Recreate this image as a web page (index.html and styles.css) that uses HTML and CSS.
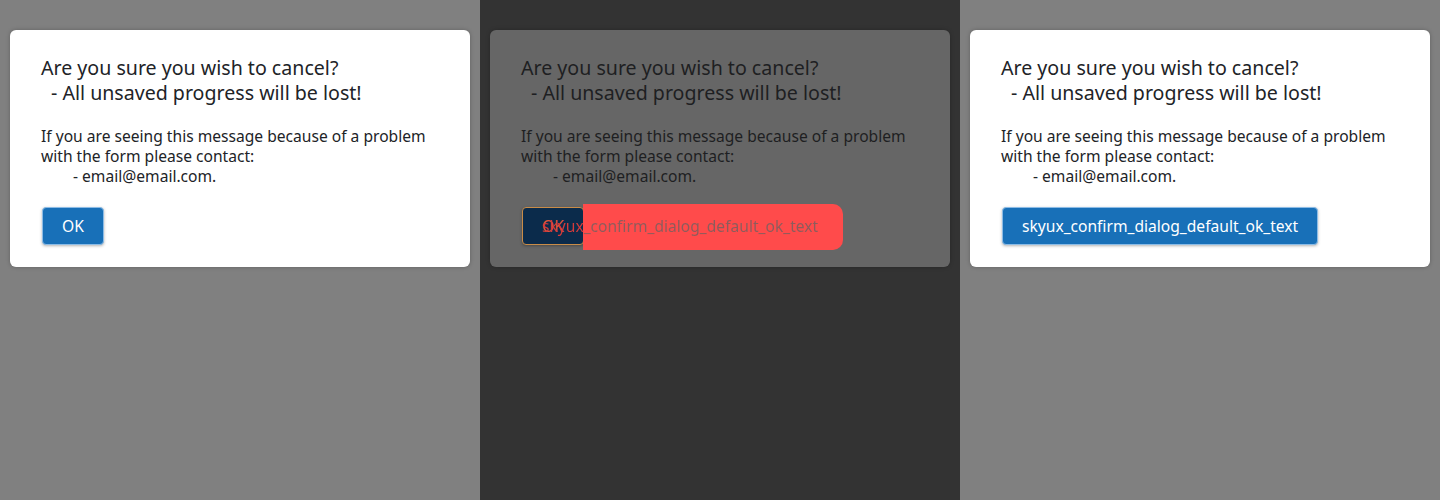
FILE: index.html
```html
<!DOCTYPE html>
<html>
<head>
<meta charset="utf-8">
<link rel="stylesheet" href="styles.css">
</head>
<body>
<div class="panels">
  <section class="panel panel-light">
    <div class="dialog">
      <h2 class="title">Are you sure you wish to cancel?<br><span class="indent-sm">- All unsaved progress will be lost!</span></h2>
      <p class="body">If you are seeing this message because of a problem with the form please contact:<br><span class="indent-lg">- email@email.com.</span></p>
      <div class="actions"><button class="btn">OK</button></div>
    </div>
  </section>
  <section class="panel panel-diff">
    <div class="dialog dialog-diff">
      <h2 class="title">Are you sure you wish to cancel?<br><span class="indent-sm">- All unsaved progress will be lost!</span></h2>
      <p class="body">If you are seeing this message because of a problem with the form please contact:<br><span class="indent-lg">- email@email.com.</span></p>
      <div class="actions actions-diff">
        <button class="btn btn-diff">OK</button>
        <div class="diff-mark"></div>
        <span class="diff-text">skyux_confirm_dialog_default_ok_text</span>
      </div>
    </div>
  </section>
  <section class="panel panel-light">
    <div class="dialog">
      <h2 class="title">Are you sure you wish to cancel?<br><span class="indent-sm">- All unsaved progress will be lost!</span></h2>
      <p class="body">If you are seeing this message because of a problem with the form please contact:<br><span class="indent-lg">- email@email.com.</span></p>
      <div class="actions"><button class="btn">skyux_confirm_dialog_default_ok_text</button></div>
    </div>
  </section>
</div>
</body>
</html>
```
FILE: styles.css
```css
* { box-sizing: border-box; }
html, body { margin: 0; padding: 0; }
body {
  font-family: "Noto Sans", "Open Sans", sans-serif;
  color: #212327;
  width: 1440px;
  height: 500px;
  overflow: hidden;
}
.panels {
  display: flex;
  height: 500px;
}
.panel {
  width: 480px;
  height: 500px;
  padding: 30px 10px;
}
.panel-light { background: #808080; }
.panel-diff { background: #333333; }

.dialog {
  background: #ffffff;
  border-radius: 6px;
  padding: 25px 30px 22px 31px;
  box-shadow: 0 0 4px rgba(0,0,0,0.25);
}
.dialog-diff {
  background: #666666;
  color: #1e1f22;
}
.title {
  margin: 0;
  font-size: 19.6px;
  font-weight: 400;
  line-height: 25px;
}
.indent-sm { padding-left: 10px; }
.body {
  margin: 21px 0 0;
  font-size: 15.6px;
  line-height: 20px;
}
.indent-lg { padding-left: 32px; }
.actions {
  margin-top: 21px;
  display: flex;
  padding-left: 1px;
}
.actions-diff { position: relative; }
.btn {
  font-family: inherit;
  font-size: 15.6px;
  line-height: 20px;
  color: #ffffff;
  background: #1870b8;
  border: 1px solid #8cbce6;
  border-radius: 4px;
  padding: 8px 19px;
  height: 38px;
  box-shadow: 0 1px 3px rgba(0,0,0,0.3);
}
.btn-diff {
  background: #0b2b4b;
  border-color: #c88c48;
  color: #e0553a;
}
.diff-mark {
  position: absolute;
  left: 62px;
  top: -3px;
  width: 260px;
  height: 46px;
  background: #ff4b4b;
  border-radius: 0 10px 10px 0;
}
.diff-text {
  position: absolute;
  left: 21px;
  top: 9px;
  font-size: 15.6px;
  line-height: 20px;
  white-space: nowrap;
  background: linear-gradient(to right, #d43a3a 0, #d43a3a 42px, #8c5c5c 42px, #8c5c5c 100%);
  -webkit-background-clip: text;
  background-clip: text;
  color: transparent;
}
```
